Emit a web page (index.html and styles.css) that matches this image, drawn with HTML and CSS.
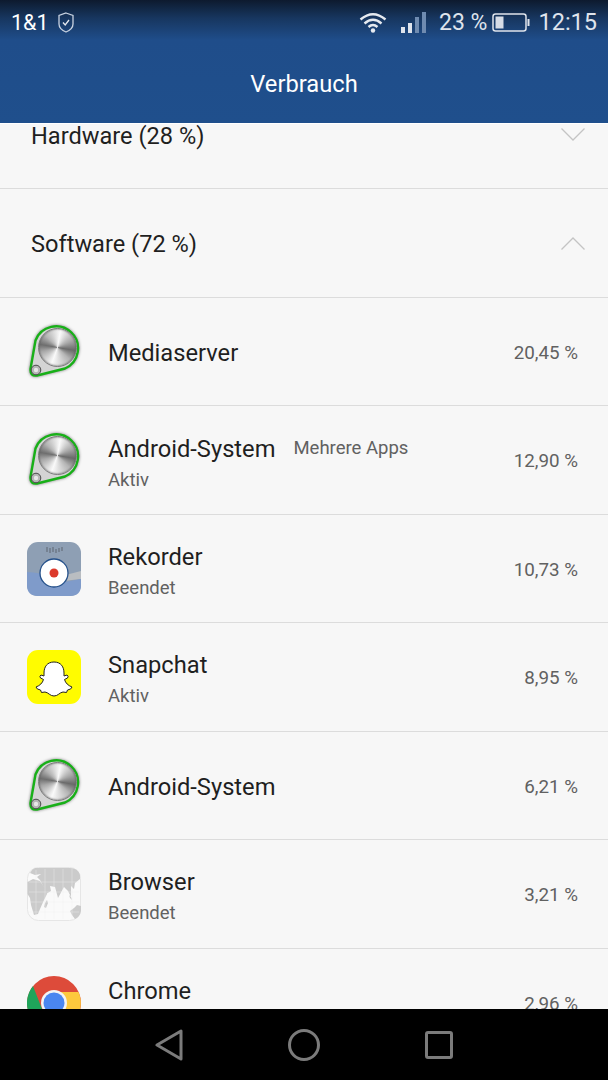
FILE: index.html

```html
<!DOCTYPE html>
<html lang="de">
<head>
    <meta charset="UTF-8">
    <meta name="viewport" content="width=device-width, initial-scale=1.0">
    <title>Verbrauch</title>
    <link rel="stylesheet" href="styles.css">
</head>
<body>
    <svg class="defs" width="0" height="0">
        <defs>
            <g id="media-frame">
                <path d="M8.500 15.500 A22 22 0 1 1 38 43.500 L10 50.500 Q3 51.500 3.500 44 Z" fill="#d4d4d4" stroke="#18b018" stroke-width="2.400"/>
                <circle cx="9" cy="45" r="4.800" fill="#b5b5b5" stroke="#4a4a4a"/>
                <circle cx="9" cy="45" r="2.200" fill="#e8e8e8"/>
            </g>
        </defs>
    </svg>

    <header class="appbar">
        <div class="status">
            <div class="status-left">
                <span>1&amp;1</span>
                <svg class="shield" width="16" height="21" viewBox="0 0 16 21">
                    <path d="M8 1 L15 3.500 V12 Q15 17 8 20 Q1 17 1 12 V3.500 Z" fill="none" stroke="#c8d2e0" stroke-width="1.300"/>
                    <path d="M5 10.500 L7.200 13 L11 8" fill="none" stroke="#e4e9f0" stroke-width="1.300"/>
                </svg>
            </div>
            <div class="status-right">
                <svg class="wifi" width="28" height="21" viewBox="0 0 28 21">
                    <path d="M1.500 7.500 Q14 -3 26.500 7.500" fill="none" stroke="#e6eaf0" stroke-width="2.400"/>
                    <path d="M5.500 11.500 Q14 4 22.500 11.500" fill="none" stroke="#e6eaf0" stroke-width="2.400"/>
                    <path d="M9.500 15 Q14 11 18.500 15" fill="none" stroke="#e6eaf0" stroke-width="2.400"/>
                    <circle cx="14" cy="18.500" r="2.200" fill="#e6eaf0"/>
                </svg>
                <svg class="signal" width="25" height="21" viewBox="0 0 25 21">
                    <rect x="0" y="15" width="4" height="6" fill="#dfe4ec"/>
                    <rect x="7" y="11" width="4" height="10" fill="#dfe4ec"/>
                    <rect x="14" y="5" width="4" height="16" fill="#6f8bb0"/>
                    <rect x="21" y="0" width="4" height="21" fill="#6f8bb0"/>
                </svg>
                <span class="battery-text">23 %</span>
                <svg class="battery" width="38" height="19" viewBox="0 0 38 19">
                    <rect x="1" y="1" width="33" height="17" rx="2.500" fill="none" stroke="#dfe4ec" stroke-width="1.500"/>
                    <rect x="3.500" y="3.500" width="8" height="12" fill="#d6dce6"/>
                    <rect x="35.500" y="6" width="2" height="7" fill="#dfe4ec"/>
                </svg>
                <span class="clock">12:15</span>
            </div>
        </div>
        <h1 class="appbar-title">Verbrauch</h1>
    </header>

    <main class="content">
        <ul class="list">
            <li class="row section-row">
                <span class="section-name">Hardware (28 %)</span>
                <svg class="chevron" width="24" height="13" viewBox="0 0 24 13"><path d="M0.500 0.500 L12 12 L23.500 0.500" fill="none" stroke="#c4c4c4" stroke-width="1.300"/></svg>
            </li>
            <li class="row section-row">
                <span class="section-name">Software (72 %)</span>
                <svg class="chevron" width="24" height="13" viewBox="0 0 24 13"><path d="M0.500 12.500 L12 1 L23.500 12.500" fill="none" stroke="#c4c4c4" stroke-width="1.300"/></svg>
            </li>
            <li class="row">
                <div class="media-icon">
                    <svg width="54" height="54" viewBox="0 0 54 54"><use href="#media-frame"/></svg>
                    <span class="media-disk"></span>
                </div>
                <div class="app-text">
                    <div class="app-name">Mediaserver</div>
                </div>
                <span class="percent">20,45 %</span>
            </li>
            <li class="row">
                <div class="media-icon">
                    <svg width="54" height="54" viewBox="0 0 54 54"><use href="#media-frame"/></svg>
                    <span class="media-disk"></span>
                </div>
                <div class="app-text">
                    <div class="app-name">Android-System<span class="app-note">Mehrere Apps</span></div>
                    <div class="app-state">Aktiv</div>
                </div>
                <span class="percent">12,90 %</span>
            </li>
            <li class="row">
                <svg class="app-icon" width="54" height="54" viewBox="0 0 54 54">
                    <rect width="54" height="54" rx="11" fill="#8e9fb4"/>
                    <path d="M0 30 Q12 30 27 36 L27 54 H11 Q0 54 0 43 Z" fill="#7f9bca"/>
                    <path d="M27 36 L54 29 V37 L27 40 Z" fill="#b9bdc1"/>
                    <path d="M27 42 L27 54 H43 Q54 54 54 43 V37 Z" fill="#7f9bca"/>
                    <circle cx="27" cy="31" r="14" fill="#fff" stroke="#24508a" stroke-width="1.300"/>
                    <circle cx="27" cy="31" r="4.500" fill="#dc3a2c"/>
                    <path d="M20 5 V10 M23 6 V11 M26 5 V10 M29 7 V11 M32 6 V10 M35 5 V9" stroke="#66707c" stroke-width="1.200"/>
                </svg>
                <div class="app-text">
                    <div class="app-name">Rekorder</div>
                    <div class="app-state">Beendet</div>
                </div>
                <span class="percent">10,73 %</span>
            </li>
            <li class="row">
                <svg class="app-icon" width="54" height="54" viewBox="0 0 54 54">
                    <rect width="54" height="54" rx="11" fill="#fffc00"/>
                    <path d="M27 12 C34 12 37 17 37 23 L37 26 L40 25 Q42 26 40.500 28 L37.500 29.500 C38.500 33 41 35.500 45 37 Q44.500 39.500 40.500 40 L39.500 42.500 L36 42 C32.500 42.500 31 46 27 46 C23 46 21.500 42.500 18 42 L14.500 42.500 L13.500 40 Q9.500 39.500 9 37 C13 35.500 15.500 33 16.500 29.500 L13.500 28 Q12 26 14 25 L17 26 L17 23 C17 17 20 12 27 12 Z" fill="#fff" stroke="#222" stroke-width="1"/>
                </svg>
                <div class="app-text">
                    <div class="app-name">Snapchat</div>
                    <div class="app-state">Aktiv</div>
                </div>
                <span class="percent">8,95 %</span>
            </li>
            <li class="row">
                <div class="media-icon">
                    <svg width="54" height="54" viewBox="0 0 54 54"><use href="#media-frame"/></svg>
                    <span class="media-disk"></span>
                </div>
                <div class="app-text">
                    <div class="app-name">Android-System</div>
                </div>
                <span class="percent">6,21 %</span>
            </li>
            <li class="row">
                <svg class="app-icon" width="54" height="54" viewBox="0 0 54 54">
                    <rect x="0.500" y="0.500" width="53" height="53" rx="11" fill="#fafafa" stroke="#e6e6e6"/>
                    <path d="M8 1 H43 Q51 1 53 8 V12 L48 16 L47 22 L44 19 L44 30 L41 24 L37 20 L31 31 L28 20 L23 19 L24 24 L19 27 L16 19 L13 13 L10 10 L14 7 L8 8 L3 6 Q5 2 8 1 Z" fill="#cbcbcb"/>
                    <path d="M0.500 15 L6 12 L13 14 L17 20 L20 27 L17 33 L13 42 L11 47 L7 48 L4 38 L3 31 L0.500 27 Z" fill="#cbcbcb"/>
                    <path d="M43 44 L47 41 L50 38 L54 39 V44 Q53 50 48 52 L45 48 Z" fill="#cbcbcb"/>
                    <path d="M18 36 L20 33 L21 36 L19 41 L17 40 Z" fill="#cbcbcb"/>
                    <path d="M42 28 L44 30 L45 33 L43 31 Z" fill="#cbcbcb"/>
                    <path d="M9 3 V50 M18 2 V52 M27 2 V52 M36 2 V52 M45 2 V52 M2 15 H52 M2 25 H52 M2 35 H52 M2 45 H52" stroke="#ececec" stroke-width="0.500" opacity="0.800"/>
                </svg>
                <div class="app-text">
                    <div class="app-name">Browser</div>
                    <div class="app-state">Beendet</div>
                </div>
                <span class="percent">3,21 %</span>
            </li>
            <li class="row">
                <svg class="app-icon" width="54" height="54" viewBox="0 0 54 54">
                    <circle cx="27" cy="27" r="27" fill="#dd4b3a"/>
                    <path d="M27 16 H51.500 A27 27 0 0 1 27 54 Z" fill="#fdc93d"/>
                    <path d="M6 10 A27 27 0 0 0 27 54 L39 33 L27 40 L15 33 Z" fill="#1fa45a"/>
                    <circle cx="27" cy="27" r="13" fill="#f4f4f4"/>
                    <circle cx="27" cy="27" r="10.500" fill="#4a86f0"/>
                </svg>
                <div class="app-text">
                    <div class="app-name">Chrome</div>
                    <div class="app-state">&nbsp;</div>
                </div>
                <span class="percent">2,96 %</span>
            </li>
        </ul>
    </main>

    <nav class="softkeys">
        <svg width="28" height="32" viewBox="0 0 28 32"><path d="M2 16 L26 2 V30 Z" fill="none" stroke="#7b7b7b" stroke-width="3" stroke-linejoin="round"/></svg>
        <svg width="32" height="32" viewBox="0 0 32 32"><circle cx="16" cy="16" r="14.500" fill="none" stroke="#7b7b7b" stroke-width="3"/></svg>
        <svg width="28" height="28" viewBox="0 0 28 28"><rect x="1.500" y="1.500" width="25" height="25" rx="1.500" fill="none" stroke="#7b7b7b" stroke-width="3"/></svg>
    </nav>
</body>
</html>
```

FILE: styles.css

```css
* {
    box-sizing: border-box;
}
html, body {
    height: 100%;
}
body {
    margin: 0;
    display: flex;
    flex-direction: column;
    height: 1080px;
    overflow: hidden;
    font-family: Roboto, "Liberation Sans", sans-serif;
    background-color: #f7f7f7;
    color: #1f1f1f;
}
.defs {
    position: absolute;
}

/* Kopfzeile */
.appbar {
    height: 124px;
    flex: none;
    color: white;
    background: linear-gradient(#0d1a2e 0, #17365f 18px, #1f4d8a 40px, #1f4f8c 100%);
    border-bottom: 1px solid #fff;
}
.status {
    height: 44px;
    display: flex;
    justify-content: space-between;
    align-items: center;
    padding: 0 11px;
    font-size: 21.500px;
    color: #dfe4ec;
}
.status-left {
    display: flex;
    align-items: center;
    gap: 9px;
    color: #fff;
}
.status-right {
    display: flex;
    align-items: center;
}
.wifi {
    margin-right: 14px;
}
.signal {
    margin-right: 13px;
}
.battery-text {
    margin-right: 5px;
    font-size: 23px;
}
.battery {
    margin-right: 8px;
}
.clock {
    font-size: 23.500px;
}
.appbar-title {
    margin: 0;
    padding-top: 24px;
    text-align: center;
    font-size: 23.700px;
    line-height: 32px;
    font-weight: 400;
}

/* Liste */
.content {
    flex: 1;
    min-height: 0;
    overflow: hidden;
}
.list {
    list-style: none;
    margin: -43.500px 0 0;
    padding: 0;
}
.row {
    height: 108.500px;
    display: flex;
    align-items: center;
    padding: 1px 30px 0 27px;
    border-bottom: 1px solid #dcdcdc;
}
.section-row {
    justify-content: space-between;
    padding: 1px 23px 0 31px;
}
.section-name {
    padding-top: 2px;
    font-size: 23.600px;
}
.chevron {
    display: block;
}
.app-icon, .media-icon {
    flex: none;
    width: 54px;
    height: 54px;
    display: block;
}
.media-icon {
    position: relative;
    filter: drop-shadow(0 0 1.500px rgba(0, 0, 0, 0.5));
}
.media-icon svg {
    display: block;
}
.media-disk {
    position: absolute;
    left: 11px;
    top: 3px;
    width: 39px;
    height: 39px;
    border-radius: 50%;
    border: 1px solid #7a7a7a;
    box-shadow: inset 0 0 2px #555;
    background: conic-gradient(from 10deg, #fafafa, #a8a8a8 55deg, #6a6a6a 90deg, #b4b4b4 125deg, #fafafa 190deg, #a8a8a8 245deg, #6e6e6e 270deg, #b4b4b4 305deg, #fafafa);
}
.app-text {
    flex: 1;
    margin-left: 27px;
    padding-top: 3px;
}
.app-name {
    font-size: 23.700px;
    line-height: 31px;
}
.app-name:not(:last-child) {
    margin-top: 4px;
}
.app-note {
    margin-left: 18px;
    font-size: 18.500px;
    color: #616161;
    vertical-align: 3px;
}
.app-state {
    margin-top: 1px;
    font-size: 18.500px;
    line-height: 29px;
    color: #616161;
}
.percent {
    padding-top: 2px;
    font-size: 18.800px;
    color: #616161;
}

/* Navigatie */
.softkeys {
    height: 71px;
    flex: none;
    display: flex;
    align-items: center;
    justify-content: space-between;
    padding: 0 155px 0 155px;
    background-color: #000;
}
```
